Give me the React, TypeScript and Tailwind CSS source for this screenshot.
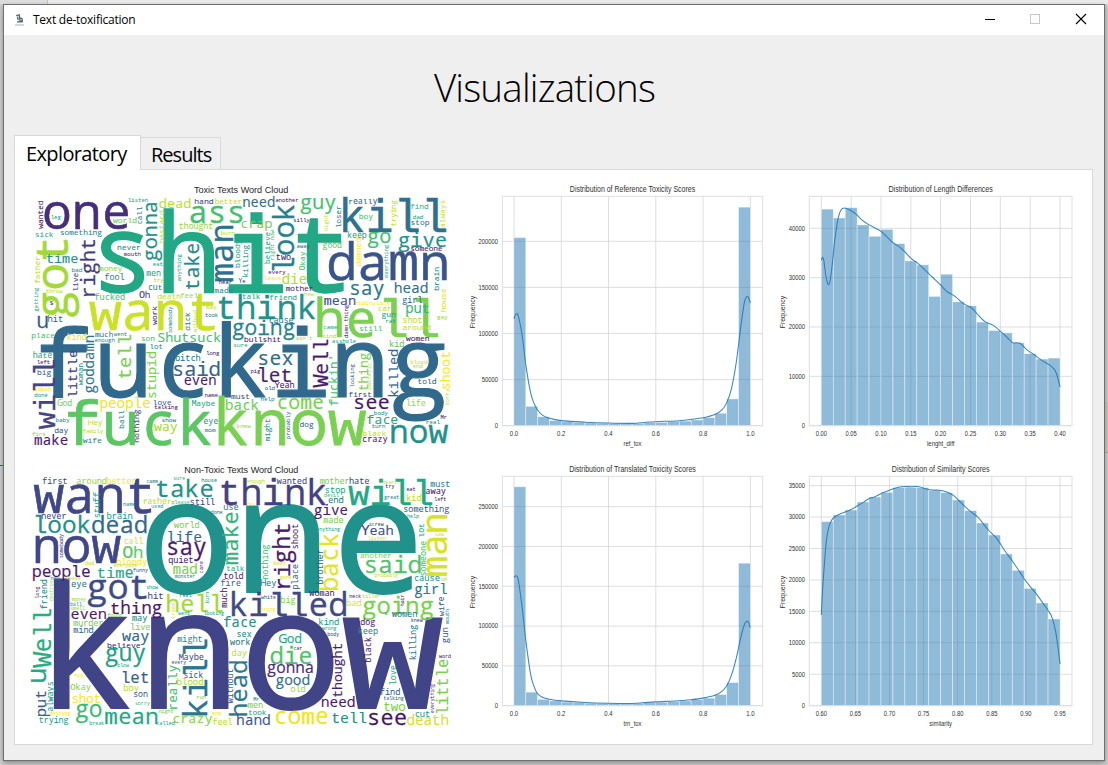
import React from "react";

type Word = [string, number, number, number, number, 1?];
type Tile = { dx: number; dy: number; words: Word[] };

const VIRIDIS = ["#440154", "#482475", "#414487", "#355f8d", "#2a788e", "#21918c", "#22a884", "#44bf70", "#7ad151", "#bddf26", "#fde725"];

function viridis(v: number) {
  const i = Math.min(9, Math.floor(v));
  const f = v - i;
  const ch = (hex: string, k: number) => parseInt(hex.slice(1 + k * 2, 3 + k * 2), 16);
  const mix = [0, 1, 2].map((k) => Math.round(ch(VIRIDIS[i], k) * (1 - f) + ch(VIRIDIS[i + 1], k) * f));
  return `rgb(${mix.join(",")})`;
}

// Each word: text, ink start, baseline, ink length, colour position, rotated flag.
// Rotated words read upwards: baseline x, bottom y, length.
const toxic: Tile[] = [
  {
    dx: 0, dy: 0,
    words: [
      ["one", 62, 146, 250, 1.3], ["listen", 313, 65, 58, 6], ["world", 267, 128, 70, 7.7], ["dead", 407, 83, 92, 9],
      ["hand", 513, 72, 54, 2], ["better", 574, 72, 79, 9], ["ass", 500, 128, 155, 7], ["something", 110, 165, 123, 4.5],
      ["sick", 35, 170, 52, 6], ["leg", 82, 116, 28, 6], ["thought", 466, 146, 100, 8.4], ["burn", 591, 166, 40, 9],
      ["shit", 228, 335, 740, 6], ["never", 281, 211, 68, 4.5], ["mouth", 300, 229, 50, 1], ["time", 68, 250, 92, 5],
      ["bad", 144, 277, 30, 5], ["money", 226, 273, 68, 8.3], ["fool", 243, 300, 57, 5], ["eat", 387, 259, 29, 6],
      ["men", 368, 287, 41, 6], ["try", 389, 306, 29, 9], ["cut", 375, 329, 39, 4], ["Oh", 347, 354, 30, 2],
      ["fucked", 213, 361, 88, 7], ["death", 401, 357, 68, 9], ["feel", 470, 355, 51, 8.5], ["throw", 66, 339, 50, 9],
      ["s", 78, 375, 9, 1], ["hear", 585, 313, 38, 1], ["made", 572, 339, 55, 5], ["want", 195, 450, 381, 9.2],
      ["hit", 73, 426, 43, 3], ["may", 547, 388, 30, 9], ["took", 544, 410, 38, 4], ["think", 582, 418, 291, 5],
      ["wanted", 58, 146, 83, 0.5, 1], ["call", 354, 131, 50, 4, 1], ["bastard", 419, 188, 95, 9, 1], ["gonna", 399, 241, 172, 5, 1],
      ["man", 627, 304, 166, 3.7, 1], ["got", 132, 408, 233, 8.6, 1], ["right", 212, 347, 169, 1.7, 1], ["father", 48, 310, 80, 9, 1],
      ["live", 161, 333, 53, 2, 1], ["getting", 41, 394, 70, 6, 1], ["anything", 471, 303, 80, 5.5, 1], ["take", 525, 328, 136, 4.7, 1],
      ["work", 398, 434, 55, 1, 1], ["somebody", 445, 458, 78, 5, 1], ["dick", 497, 451, 53, 4, 1], ["without", 519, 456, 68, 9, 1],
    ],
  },
  {
    dx: 633, dy: 0,
    words: [
      ["need", 25, 80, 93, 3.5], ["another", 122, 67, 68, 0.6], ["guy", 198, 87, 103, 7], ["really", 343, 73, 83, 3],
      ["kill", 325, 155, 307, 3.7], ["find", 527, 88, 52, 6.5], ["dad", 534, 116, 30, 6], ["stop", 529, 135, 53, 4],
      ["boy", 373, 117, 40, 7], ["silly", 176, 127, 48, 1], ["crap", 20, 143, 90, 8], ["keep", 339, 175, 55, 6],
      ["go", 400, 188, 66, 7], ["give", 492, 201, 140, 5], ["someone", 528, 214, 93, 0.5], ["away", 186, 205, 38, 3.5],
      ["good", 264, 204, 55, 7.5], ["two", 124, 241, 43, 1], ["every", 101, 282, 50, 1], ["leave", 90, 299, 48, 10],
      ["die", 143, 311, 70, 8.8], ["mother", 153, 334, 81, 1], ["Ye", 12, 308, 19, 2], ["new", 208, 349, 30, 9],
      ["damn", 283, 300, 350, 2.6], ["say", 348, 345, 98, 4], ["head", 480, 338, 97, 3.5], ["talk", 22, 358, 53, 6],
      ["friend", 104, 359, 80, 6], ["mean", 268, 374, 92, 2.5], ["ridiculous", 362, 376, 100, 10], ["girl", 503, 370, 58, 3.3],
      ["car", 431, 394, 37, 9], ["put", 514, 400, 68, 6.5], ["gun", 441, 412, 40, 6], ["hell", 248, 472, 360, 8],
      ["bloody", 14, 262, 82, 6, 1], ["look", 178, 275, 200, 4.3, 1], ["loser", 319, 142, 64, 4.5, 1], ["night", 278, 152, 48, 9, 1],
      ["trying", 483, 138, 77, 9, 1], ["always", 630, 142, 80, 9.3, 1], ["believe", 104, 250, 93, 6, 1], ["right now", 118, 240, 90, 7, 1],
      ["killing", 39, 290, 95, 5, 1], ["Okay", 210, 270, 55, 7, 1], ["damned", 379, 258, 82, 10, 1], ["everything", 459, 293, 98, 6, 1],
      ["brain", 611, 330, 67, 5, 1], ["house", 632, 395, 68, 9.4, 1], ["damn thing", 340, 473, 98, 1, 1],
    ],
  },
  {
    dx: 0, dy: 408,
    words: [
      ["u", 42, 37, 28, 3], ["place", 24, 66, 67, 7], ["kind", 131, 71, 55, 9.8], ["much", 214, 63, 52, 4],
      ["went", 270, 59, 38, 5], ["enough", 213, 77, 58, 5], ["son", 353, 74, 38, 7], ["lot", 378, 98, 38, 5],
      ["Shutsuck", 402, 78, 187, 7], ["hate", 28, 127, 55, 6], ["left", 40, 143, 37, 0.5], ["big", 41, 178, 40, 3],
      ["idiot", 33, 225, 48, 10], ["done", 32, 243, 38, 5.5], ["God", 102, 270, 41, 8], ["bitch", 455, 135, 73, 4],
      ["said", 450, 180, 136, 3.2], ["long", 548, 117, 38, 1], ["even", 482, 208, 92, 0.7], ["name", 543, 244, 38, 1],
      ["people", 230, 276, 147, 9.8], ["love", 388, 266, 53, 3], ["talking", 392, 280, 69, 0.5], ["Maybe", 504, 269, 68, 6],
      ["fucking", 50, 242, 1215, 3.4], ["fuck", 132, 387, 428, 7.4], ["know", 585, 387, 443, 8], ["baby", 96, 318, 40, 5],
      ["day", 92, 352, 40, 3], ["Hey", 194, 328, 41, 9], ["family", 177, 350, 60, 9], ["wife", 176, 380, 56, 4.5],
      ["fire", 25, 359, 39, 8.5], ["make", 32, 386, 98, 0.7], ["show", 415, 319, 41, 3.5], ["way", 390, 345, 69, 8.7],
      ["eye", 540, 324, 41, 5.5], ["mom", 543, 347, 31, 4], ["must", 622, 250, 54, 2.5], ["back", 606, 281, 97, 7.7],
      ["sure", 630, 93, 40, 6], ["going", 627, 57, 185, 4.5],
      ["will", 93, 340, 207, 2, 1], ["little", 160, 243, 138, 2, 1], ["woman", 177, 208, 65, 5, 1], ["goddamn", 210, 230, 170, 3.9, 1],
      ["tell", 322, 187, 130, 8, 1], ["stupid", 396, 245, 137, 8, 1], ["ball", 301, 336, 52, 4.5, 1], ["nothing", 346, 378, 97, 1.5, 1],
    ],
  },
  {
    dx: 633, dy: 408,
    words: [
      ["cause", 104, 21, 70, 4], ["bullshit", 29, 77, 108, 0.7], ["ain't", 184, 73, 48, 9], ["mind", 262, 66, 41, 9],
      ["came", 266, 38, 40, 6], ["still", 374, 45, 67, 7], ["rat", 453, 20, 28, 6], ["shot", 505, 20, 56, 9],
      ["around", 504, 43, 82, 9], ["women", 513, 76, 69, 0.5], ["kid", 465, 94, 41, 7.5], ["asshole", 292, 80, 70, 6],
      ["sex", 73, 146, 100, 3.5], ["pig", 48, 171, 28, 1], ["let", 70, 197, 98, 0.8], ["Yeah", 120, 215, 57, 0.7],
      ["old", 90, 223, 29, 3], ["help", 78, 255, 40, 5], ["come", 131, 278, 132, 8], ["see", 360, 280, 100, 0.5],
      ["first", 342, 243, 67, 2], ["told", 549, 205, 54, 3], ["blood", 527, 143, 50, 9.5], ["end", 534, 157, 29, 9],
      ["life", 515, 269, 56, 8.5], ["Mr", 618, 308, 17, 0.5], ["real", 575, 325, 39, 5], ["body", 418, 297, 40, 5],
      ["face", 397, 325, 90, 6], ["turn", 411, 337, 39, 4.5], ["black", 384, 361, 69, 9], ["crazy", 384, 378, 73, 0.7],
      ["now", 470, 380, 170, 5], ["dog", 195, 332, 40, 3], ["knew", 7, 336, 40, 8.5], ["gay", 607, 8, 30, 8.5],
      ["Well", 280, 210, 138, 0.7, 1], ["fuckin'", 308, 268, 152, 7, 1], ["looking", 356, 213, 68, 3, 1], ["thing", 400, 223, 112, 8, 1],
      ["pathetic", 408, 220, 78, 9, 1], ["killed", 488, 240, 138, 3, 1], ["shoot", 645, 218, 110, 10, 1], ["sorry", 641, 268, 50, 9, 1],
      ["might", 104, 375, 66, 5, 1], ["probably", 165, 368, 80, 3, 1],
    ],
  },
];

const nonToxic: Tile[] = [
  {
    dx: 0, dy: 0,
    words: [
      ["first", 56, 73, 73, 2.5], ["around", 159, 72, 88, 8.5], ["better", 250, 72, 86, 10], ["came", 368, 70, 34, 4],
      ["sure", 449, 60, 33, 6.5], ["house", 533, 67, 45, 4.5], ["want", 28, 158, 358, 2.1], ["take", 398, 111, 167, 5],
      ["think", 590, 135, 315, 1.9], ["name", 298, 137, 35, 5], ["father", 357, 132, 85, 9], ["please", 444, 132, 52, 7],
      ["still", 500, 136, 72, 2], ["used", 383, 145, 34, 6], ["use", 600, 151, 42, 4], ["done", 561, 162, 34, 4],
      ["never", 54, 177, 72, 2], ["brain", 250, 178, 74, 5.5], ["look", 32, 219, 165, 5], ["dead", 205, 219, 162, 3.4],
      ["world", 450, 203, 75, 8], ["life", 431, 246, 100, 3.4], ["one", 370, 397, 803, 5], ["say", 432, 286, 113, 0.7],
      ["quiet", 434, 308, 73, 0.7], ["mad", 448, 341, 70, 8], ["monster", 453, 353, 60, 5], ["call", 302, 252, 55, 9.5],
      ["Oh", 299, 294, 55, 7.5], ["now", 36, 309, 255, 2.1], ["bloody", 279, 315, 89, 10], ["everyone", 269, 321, 70, 9],
      ["dad", 183, 314, 26, 9], ["people", 27, 350, 170, 0.7], ["time", 221, 353, 105, 6], ["funny", 328, 337, 43, 3],
      ["new", 81, 361, 27, 4.5], ["leave", 127, 361, 43, 9], ["eye", 143, 380, 44, 4], ["got", 193, 417, 177, 2.3],
      ["show", 368, 388, 34, 5.5], ["hit", 373, 417, 44, 2], ["real", 468, 412, 34, 4], ["talk", 608, 334, 52, 6],
      ["told", 600, 357, 57, 0.8], ["fire", 591, 379, 58, 3.8],
      ["stuff", 227, 172, 74, 6, 1], ["somebody", 118, 293, 70, 1, 1], ["care", 537, 338, 34, 1, 1], ["make", 642, 313, 155, 6.5, 1],
      ["long", 46, 414, 34, 1, 1], ["friend", 69, 446, 86, 4.5, 1], ["destroy", 88, 422, 60, 8.5, 1], ["much", 609, 442, 57, 0.7, 1],
    ],
  },
  {
    dx: 633, dy: 0,
    words: [
      ["enough", 37, 70, 52, 9], ["wanted", 125, 72, 89, 2], ["mother", 255, 73, 87, 8], ["hate", 344, 73, 58, 2],
      ["will", 340, 135, 250, 6], ["heart", 443, 71, 43, 9], ["try", 452, 83, 26, 1], ["eat", 515, 94, 26, 0.7],
      ["must", 587, 82, 57, 4], ["great", 448, 118, 43, 4], ["kid", 516, 124, 42, 9], ["away", 573, 102, 59, 0.7],
      ["left", 599, 124, 34, 0.8], ["stop", 272, 100, 58, 6], ["devil", 268, 112, 43, 7], ["end", 281, 128, 43, 4],
      ["Ye", 36, 138, 17, 10], ["give", 239, 165, 97, 0.8], ["something", 507, 156, 135, 3], ["help", 517, 173, 34, 6],
      ["made", 266, 190, 58, 8], ["anything", 245, 213, 70, 6], ["screw", 403, 197, 43, 2], ["Yeah", 381, 226, 92, 2.3],
      ["listen", 400, 241, 52, 9.5], ["another", 377, 295, 92, 8], ["said", 393, 340, 163, 7.2], ["probably", 419, 352, 70, 9],
      ["saw", 601, 229, 26, 9.5], ["cause", 540, 363, 73, 5], ["uh", 620, 364, 16, 8.5], ["girl", 540, 401, 95, 4],
      ["beat", 117, 314, 34, 9.5], ["gone", 135, 358, 34, 9.5], ["Hey", 79, 378, 44, 4], ["white", 78, 417, 44, 3],
      ["woman", 223, 408, 74, 0.7], ["killer", 384, 413, 51, 9], ["neck", 344, 415, 34, 0.8],
      ["right", 166, 383, 192, 0.8, 1], ["shoot", 188, 265, 72, 0.8, 1], ["nothing", 100, 357, 103, 7, 1], ["place", 190, 387, 73, 3, 1],
      ["brother", 265, 372, 103, 3, 1], ["back", 308, 390, 168, 9.6, 1], ["man", 635, 348, 182, 9.4, 1], ["lot", 567, 231, 40, 6, 1],
      ["someone", 572, 347, 103, 7, 1],
    ],
  },
  {
    dx: 0, dy: 408,
    words: [
      ["money", 143, 16, 43, 8.5], ["ball", 139, 29, 34, 6], ["smell", 140, 43, 42, 8.5], ["even", 143, 70, 102, 0.7],
      ["thing", 261, 55, 152, 0.6], ["hell", 430, 48, 165, 8.6], ["found", 251, 64, 42, 8], ["went", 463, 58, 34, 6],
      ["looking", 540, 58, 60, 6], ["murder", 149, 90, 88, 8], ["mind", 149, 112, 58, 3.3], ["may", 325, 76, 44, 4.5],
      ["live", 320, 102, 58, 8], ["way", 294, 136, 80, 3.3], ["believe", 251, 155, 97, 0.7], ["guy", 246, 194, 117, 5.6],
      ["blow", 281, 213, 34, 6.3], ["know", 93, 337, 1165, 2], ["let", 294, 260, 79, 3], ["boy", 300, 286, 44, 9],
      ["son", 330, 304, 40, 3], ["sorry", 334, 328, 43, 7], ["Okay", 140, 282, 60, 8.3], ["nut", 153, 242, 26, 10],
      ["shot", 146, 320, 83, 10], ["go", 157, 364, 75, 6.8], ["mean", 244, 383, 155, 6], ["getting", 79, 356, 60, 10],
      ["trying", 46, 381, 87, 5.5], ["break", 197, 388, 43, 6], ["called", 399, 388, 52, 5.5], ["night", 405, 351, 43, 8],
      ["crazy", 449, 380, 115, 8.2], ["feel", 567, 388, 57, 9], ["mom", 565, 356, 26, 10], ["might", 461, 138, 73, 5],
      ["Maybe", 465, 192, 73, 2.3], ["every", 443, 203, 43, 2.5], ["sick", 481, 245, 55, 3], ["blood", 460, 266, 77, 8.8],
      ["run", 519, 309, 26, 8], ["face", 600, 94, 95, 5],
      ["Well", 82, 210, 170, 6.2, 1], ["u", 66, 257, 36, 6, 1], ["put", 67, 360, 75, 3, 1], ["always", 86, 345, 87, 5.5, 1],
      ["tried", 453, 66, 43, 9.5, 1], ["turn", 556, 22, 34, 6, 1], ["really", 458, 338, 130, 7, 1], ["kill", 548, 357, 225, 3.9, 1],
      ["without", 628, 322, 103, 3, 1],
    ],
  },
  {
    dx: 633, dy: 408,
    words: [
      ["killed", -9, 61, 341, 2.2], ["big", 138, 21, 43, 8], ["bring", 78, 46, 44, 10], ["bad", 335, 31, 43, 9.5],
      ["going", 385, 53, 210, 8], ["women", 471, 62, 74, 4], ["s", 449, 58, 7, 6], ["kind", 253, 87, 58, 5.5],
      ["wrong", 261, 101, 43, 6], ["body", 278, 119, 34, 2.3], ["dog", 377, 87, 43, 0.8], ["keep", 371, 114, 57, 4.8],
      ["knew", 529, 77, 34, 2], ["sex", 7, 123, 42, 4.5], ["work", -15, 147, 60, 4], ["day", -9, 181, 44, 9],
      ["God", 134, 140, 64, 6], ["die", 108, 203, 120, 7.2], ["car", 177, 163, 24, 0.8], ["gonna", 98, 230, 135, 1.2],
      ["good", 124, 266, 98, 3.5], ["old", 168, 287, 42, 8.5], ["need", 261, 332, 97, 0.7], ["find", 436, 297, 58, 3],
      ["talking", 446, 313, 60, 3], ["two", 447, 345, 63, 8], ["see", 402, 388, 110, 0.5], ["cut", 542, 364, 42, 5.5],
      ["death", 517, 388, 122, 9.4], ["word", 612, 186, 35, 0.8], ["tell", 291, 380, 102, 5], ["come", 124, 383, 153, 9.8],
      ["hand", 7, 387, 97, 2.7], ["men", 39, 336, 44, 8], ["took", 41, 357, 52, 5.5], ["Mr", 56, 315, 16, 4],
      ["hair", 507, 30, 34, 1, 1], ["wife", 627, 60, 57, 3, 1], ["head", 36, 358, 162, 4, 1], ["thought", 322, 303, 160, 0.8, 1],
      ["black", 408, 198, 73, 0.8, 1], ["killing", 544, 190, 103, 4, 1], ["love", 483, 266, 57, 6, 1], ["everything", 598, 350, 86, 0.8, 1],
      ["little", 640, 353, 162, 8, 1], ["gun", 638, 140, 45, 3, 1], ["mouth", 641, 83, 43, 5, 1],
    ],
  },
];

// Letters sit centred in equal cells; those that need slabs or a fixed width use the monospaced face.
const CELL = 0.602;
const FIXED = /[iltfrmwjMWYO]/;
const BEARINGS: Record<string, [number, number]> = {
  k: [0.105, 0.06], n: [0.08, 0.08], h: [0.08, 0.08], u: [0.08, 0.08], o: [0.055, 0.055], e: [0.075, 0.07], s: [0.1, 0.1],
  a: [0.07, 0.1], c: [0.118, 0.1], g: [0.055, 0.03], d: [0.055, 0.08], b: [0.08, 0.055], p: [0.08, 0.055], y: [0.05, 0.05],
  w: [0.0, 0.0], m: [0.045, 0.045], i: [0.08, 0.06], l: [0.08, 0.06], t: [0.06, 0.07], f: [0.06, 0.06], r: [0.14, 0.06],
};

function CloudWord({ text, transform, len, color }: { text: string; transform: string; len: number; color: string }) {
  const lb = (BEARINGS[text[0]] ?? [0.05, 0.05])[0];
  const rb = (BEARINGS[text[text.length - 1]] ?? [0.05, 0.05])[1];
  const fs = len / (text.length * CELL - lb - rb);
  return (
    <text fontSize={fs} fill={color} stroke={color} strokeWidth={fs * 0.012} textAnchor="middle" transform={transform}>
      {text.split("").map((ch, i) => (
        <tspan
          key={i}
          x={(i * CELL + CELL / 2 - lb - (ch === "k" ? 0.02 : 0)) * fs}
          fontSize={/[MWYO]/.test(ch) ? fs * 1.09 : fs}
          className={FIXED.test(ch) ? "font-['Liberation_Mono',monospace]" : "font-['Open_Sans',sans-serif]"}
        >
          {ch}
        </tspan>
      ))}
    </text>
  );
}

function Cloud({ title, titleX, titleW, tiles, top }: { title: string; titleX: number; titleW: number; tiles: Tile[]; top: number }) {
  // Large words are painted first so the small ones nested in their counters stay readable.
  const words = tiles
    .flatMap((t) => t.words.map(([text, x, y, len, c, rot]) => ({ text, x: x + t.dx, y: y + t.dy, len, c, rot })))
    .sort((a, b) => b.len / b.text.length - a.len / a.text.length);
  return (
    <svg className="block h-full w-full overflow-visible" viewBox={`0 ${top} 1308 825`}>
      <text x={titleX} y={38} fontSize={26} textLength={titleW} lengthAdjust="spacingAndGlyphs" fill="#262626" className="font-['Liberation_Sans',sans-serif]">{title}</text>
      {words.map((w) => (
        <CloudWord key={`${w.text}-${w.x}-${w.y}`} text={w.text} len={w.len} color={viridis(w.c)} transform={`translate(${w.x} ${w.y})${w.rot ? " rotate(-90)" : ""}`} />
      ))}
    </svg>
  );
}

type Pt = [number, number];

function smooth(p: Pt[]) {
  let d = `M${p[0][0]} ${p[0][1]}`;
  for (let i = 0; i < p.length - 1; i++) {
    const a = p[Math.max(0, i - 1)], b = p[i], c = p[i + 1], e = p[Math.min(p.length - 1, i + 2)];
    d += `C${b[0] + (c[0] - a[0]) / 6} ${b[1] + (c[1] - a[1]) / 6} ${c[0] - (e[0] - b[0]) / 6} ${c[1] - (e[1] - b[1]) / 6} ${c[0]} ${c[1]}`;
  }
  return d;
}

type ChartProps = {
  title: string; titleW: number; xlabel: string; labelW: number;
  left: number; right: number; top: number; x0: number; x1: number;
  unit: number; step: number; yMax: number; xticks: string[];
  bars: number[]; kde: Pt[]; width: number; xLast: number;
};

function Chart(p: ChartProps) {
  const base = p.top + 688;
  const mid = (p.left + p.right) / 2;
  const bw = (p.x1 - p.x0) / p.bars.length;
  const ys: number[] = [];
  for (let v = 0; v <= p.yMax; v += p.step) ys.push(v);
  return (
    <svg className="block h-full w-full overflow-visible font-['Liberation_Sans',sans-serif]" viewBox={`0 0 ${p.width} 825`} fill="#303030">
      <text x={mid} y={p.top - 13} fontSize={24.5} textAnchor="middle" textLength={p.titleW} lengthAdjust="spacingAndGlyphs">{p.title}</text>
      <g stroke="#cccccc" strokeOpacity={0.65} strokeWidth={3} fill="none">
        {p.xticks.map((t, i) => {
          const x = p.x0 + ((p.xLast - p.x0) * i) / (p.xticks.length - 1);
          return <path key={t} d={`M${x} ${p.top}V${base}`} />;
        })}
        {ys.map((v) => <path key={v} d={`M${p.left} ${base - v * p.unit}H${p.right}`} />)}
      </g>
      {p.bars.map((v, i) => (
        <rect key={i} x={p.x0 + i * bw} y={base - v * p.unit} width={bw} height={v * p.unit} fill="#1f77b4" fillOpacity={0.5} stroke="#ffffff" strokeOpacity={0.6} strokeWidth={2} />
      ))}
      <rect x={p.left} y={p.top} width={p.right - p.left} height={688} fill="none" stroke="#dedede" strokeWidth={3} />
      <path d={smooth(p.kde)} fill="none" stroke="#1f77b4" strokeOpacity={0.88} strokeWidth={3.2} />
      <g fontSize={20}>
        {p.xticks.map((t, i) => (
          <text key={t} x={p.x0 + ((p.xLast - p.x0) * i) / (p.xticks.length - 1)} y={base + 31} textAnchor="middle" textLength={t.length === 3 ? 25 : 34} lengthAdjust="spacingAndGlyphs">{t}</text>
        ))}
        {ys.map((v) => (
          <text key={v} x={p.left - 13} y={base + 7 - v * p.unit} textAnchor="end" textLength={String(v).length * 9.8} lengthAdjust="spacingAndGlyphs">{v}</text>
        ))}
        <text x={mid} y={base + 60} fontSize={21} textAnchor="middle" textLength={p.labelW} lengthAdjust="spacingAndGlyphs">{p.xlabel}</text>
        <text transform={`translate(${p.left - 73 - (p.left > 120 ? 10 : 0)} ${p.top + 347}) rotate(-90)`} textAnchor="middle" textLength={97} lengthAdjust="spacingAndGlyphs">Frequency</text>
      </g>
    </svg>
  );
}

const fromData = (base: number, unit: number, pts: Pt[]): Pt[] => pts.map(([x, v]) => [162 + x * 709, base - v * unit]);

const refKde = fromData(737, 2.766, [[0, 116], [0.008, 121], [0.018, 119], [0.035, 97], [0.05, 66], [0.07, 36], [0.085, 24], [0.1, 17], [0.12, 11.5], [0.15, 8], [0.2, 5.5], [0.3, 3.8], [0.4, 2.8], [0.5, 2.5], [0.55, 3.5], [0.6, 4.3], [0.7, 5.4], [0.75, 6.8], [0.8, 8.5], [0.85, 12], [0.88, 17], [0.9, 25], [0.92, 40], [0.94, 68], [0.96, 108], [0.975, 134], [0.985, 140], [0.992, 139], [1, 133]]);
const trnKde = fromData(752, 2.388, [[0, 161], [0.008, 163], [0.018, 158], [0.035, 122], [0.05, 82], [0.07, 40], [0.085, 24], [0.1, 15], [0.12, 10.5], [0.15, 8], [0.2, 6], [0.3, 4], [0.4, 3], [0.5, 2.8], [0.55, 3.8], [0.6, 4.8], [0.7, 6.2], [0.75, 7.5], [0.8, 9.5], [0.85, 13], [0.88, 18], [0.9, 25], [0.92, 38], [0.94, 59], [0.96, 86], [0.975, 102], [0.985, 106], [0.992, 105], [1, 98]]);
const lenKde: Pt[] = [[139, 241], [143, 232], [147, 245], [153, 290], [160, 314], [166, 298], [172, 250], [180, 175], [190, 112], [198, 90], [208, 84], [225, 90], [245, 104], [262, 121], [280, 133], [300, 144], [318, 154], [335, 170], [355, 189], [375, 202], [390, 216], [408, 235], [430, 251], [455, 275], [475, 294], [497, 315], [515, 334], [540, 349], [565, 371], [590, 384], [605, 400], [630, 425], [655, 436], [680, 457], [700, 476], [714, 488], [735, 490], [755, 509], [780, 526], [800, 541], [825, 556], [838, 568], [845, 582], [850, 600], [855, 621]];
const simKde: Pt[] = [[139, 480], [143, 400], [148, 330], [155, 250], [165, 205], [178, 186], [200, 175], [225, 165], [245, 154], [265, 142], [282, 131], [300, 125], [320, 115], [340, 107], [355, 101], [380, 95], [410, 95], [432, 95], [450, 101], [470, 105], [495, 106], [515, 111], [535, 121], [550, 135], [570, 155], [590, 172], [610, 188], [640, 225], [665, 250], [690, 288], [712, 318], [735, 352], [748, 372], [765, 394], [785, 418], [805, 446], [822, 470], [832, 490], [842, 530], [850, 585], [855, 627]];

const refBars = [204, 21, 9.7, 5.5, 4.3, 3.6, 3, 2.7, 2.4, 2, 2.5, 3.3, 3.6, 4.4, 5, 6.2, 8.8, 13.5, 29, 237].map((v) => v * 1000);
const trnBars = [275, 17, 8, 6, 4.5, 3.8, 3.2, 2.9, 2.6, 2.3, 2.8, 3.8, 4.2, 5, 6, 7.5, 9.5, 14, 29, 179].map((v) => v * 1000);
const lenBars = [43.9, 42.1, 44.2, 40.7, 38.4, 39.8, 36.9, 33.4, 32.6, 26.2, 30.7, 25.1, 24.3, 21, 19.3, 18.8, 16.8, 14.6, 13.5, 13.7].map((v) => v * 1000);
const simBars = [200, 180, 165, 141, 126, 112, 98, 97, 98, 106, 113, 135, 167, 204, 240, 297, 346, 400, 444, 492].map((y) => (752 - y) / 0.01886);

const tox = { left: 127, right: 908, x0: 162, x1: 871, xLast: 871, width: 945, xticks: ["0.0", "0.2", "0.4", "0.6", "0.8", "1.0"] };
const diff = { left: 103, right: 891, x0: 139, x1: 855, xLast: 855, width: 951 };

export default function App() {
  return (
    <div className="relative flex h-[765px] w-[1108px] flex-col overflow-hidden bg-[#cfcfcf] pt-1 pr-[3px] pb-1 pl-[3px] font-['Open_Sans','Noto_Sans',sans-serif] text-black">
      <div className="absolute top-0 left-0 h-1 w-[47px] bg-[#dedede]" />
      <div className="absolute top-0 left-[47px] h-1 w-[1061px] border-l border-[#c3c3c3] bg-[#ececec]" />
      <div className="absolute top-[402px] left-[1105px] h-[51px] w-[3px] border-b border-[#aaaaaa] bg-[#c9c9c0]" />
      <div className="absolute top-[465px] left-0 h-px w-[3px] bg-[#4b4bd8]" />
      <div className="relative flex h-[757px] w-[1102px] flex-col border border-[#6f6f6f] bg-[#efefef] shadow-[0_2px_5px_rgba(0,0,0,0.35)]">
        <div className="flex h-[30px] shrink-0 items-center bg-white">
          <svg className="ml-[10px] h-3 w-3" viewBox="0 0 12 12" fill="none">
            <path d="M2.2 1.6 5.2.9l.9 6.3M3.4 2.6l.9 3.6M6.2 3.8l1.8.8.4 2.6H5.4M3 7.9h5.6" stroke="#526670" strokeWidth="1.3" />
            <path d="M1 11h9" stroke="#8b9aa2" strokeWidth=".8" />
          </svg>
          <span className="ml-[7px] text-[12px] leading-[16px] tracking-[-0.24px]">Text de-toxification</span>
          <svg className="ml-auto h-[30px] w-[130px]" viewBox="0 0 130 30" fill="none">
            <path d="M11 14.5h10" stroke="#000" />
            <rect x="56.5" y="9.5" width="9" height="9" stroke="#c8c8c8" />
            <path d="m102 9 10 10m0-10-10 10" stroke="#000" strokeWidth="1.1" />
          </svg>
        </div>
        <h1 className="flex h-[100px] shrink-0 items-center justify-center pt-[6px] pr-[19px] text-[38.5px] font-light tracking-[-0.8px]">Visualizations</h1>
        <div className="z-10 ml-[10px] flex h-[35px] shrink-0 items-end text-[20px]">
          <div className="flex h-[35px] w-[127px] items-center border border-b-0 border-[#d9d9d9] bg-white pt-0.5 pl-[11px] tracking-[-0.62px]">Exploratory</div>
          <div className="mb-px flex h-[32px] w-[80px] items-center border border-b-0 border-l-0 border-[#d9d9d9] bg-[#f0f0f0] pt-[3px] pl-[10px] tracking-[-0.98px]">Results</div>
        </div>
        <main className="-mt-px ml-[10px] h-[576px] w-[1079px] shrink-0 border border-[#d9d9d9] bg-white pt-[10px] pl-[9px]">
          <div className="grid grid-cols-[436px_315px_317px] grid-rows-[275px_275px]">
            <Cloud title="Toxic Texts Word Cloud" titleX={510} titleW={283} tiles={toxic} top={0} />
            <Chart {...tox} title="Distribution of Reference Toxicity Scores" titleW={376} xlabel="ref_tox" labelW={54} top={49} unit={0.002766} step={50000} yMax={200000} bars={refBars} kde={refKde} />
            <Chart {...diff} title="Distribution of Length Differences" titleW={313} xlabel="lenght_diff" labelW={82} top={49} unit={0.0148} step={10000} yMax={40000} xticks={["0.00", "0.05", "0.10", "0.15", "0.20", "0.25", "0.30", "0.35", "0.40"]} bars={lenBars} kde={lenKde} />
            <Cloud title="Non-Toxic Texts Word Cloud" titleX={481} titleW={342} tiles={nonToxic} top={-15} />
            <Chart {...tox} title="Distribution of Translated Toxicity Scores" titleW={380} xlabel="trn_tox" labelW={54} top={64} unit={0.002388} step={50000} yMax={250000} bars={trnBars} kde={trnKde} />
            <Chart {...diff} title="Distribution of Similarity Scores" titleW={293} xlabel="similarity" labelW={68} top={64} unit={0.01886} step={5000} yMax={35000} xticks={["0.60", "0.65", "0.70", "0.75", "0.80", "0.85", "0.90", "0.95"]} bars={simBars} kde={simKde} />
          </div>
        </main>
      </div>
    </div>
  );
}
